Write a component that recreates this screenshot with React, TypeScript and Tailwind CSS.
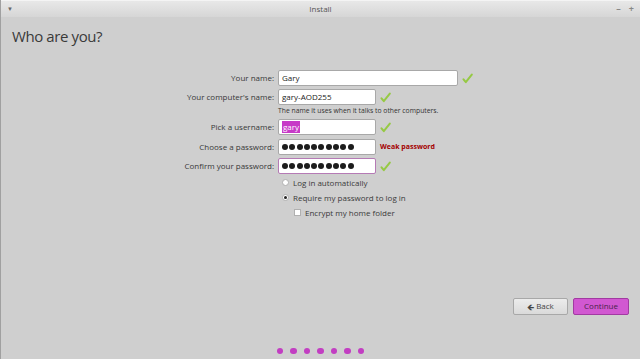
import { ReactNode } from "react";

const Check = () => (
    <svg width="11" height="11" viewBox="0 0 11 11" className="shrink-0">
        <path d="M1.5 6.3 L3.8 9.2 L9.8 1.6" fill="none" stroke="#96c944" strokeWidth="2" strokeLinecap="round" strokeLinejoin="round" />
    </svg>
)

const Dots = () => (
    <div className="flex gap-[1.3px]">
        {[0, 1, 2, 3, 4, 5, 6, 7, 8, 9].map((i) => (
            <span key={i} className="w-[6px] h-[6px] rounded-full bg-[#1c1c1c]" />
        ))}
    </div>
)

const Row = ({ label, children }: { label: string, children: ReactNode }) => (
    <div className="flex items-center h-[16px]">
        <div className="w-[277px] text-right pr-[4px] text-[8px] text-[#383838]">{label}</div>
        <div className="flex items-center gap-[4px]">{children}</div>
    </div>
)

const Field = ({ w, children, border = "border-[#a8a8a8]" }: { w: string, children: ReactNode, border?: string }) => (
    <div className={`${w} h-[16px] bg-white border ${border} rounded-[2px] flex items-center px-[3px] text-[8px] text-[#222]`}>
        {children}
    </div>
)

const App = () => {
    return (
        <div className="w-[640px] h-[359px] flex flex-col bg-[#cfcfcf] border-l border-[#a0a0a0] overflow-hidden" style={{ fontFamily: '"Open Sans", "Noto Sans", sans-serif' }}>

            <div className="h-[17px] shrink-0 grid grid-cols-3 items-center px-[6px] bg-gradient-to-b from-[#e8e8e8] to-[#d6d6d6] border-t border-[#f4f4f4]">
                <span className="text-[6px] text-[#666]">▼</span>
                <span className="text-[8px] text-[#555] text-center">Install</span>
                <div className="flex items-center justify-end gap-[8px] text-[9px] text-[#888] font-bold">
                    <span>–</span>
                    <span>+</span>
                </div>
            </div>

            <div className="pl-[11px] pt-[9px] text-[15px] leading-[20px] tracking-[-0.4px] text-[#3a3a3a]">Who are you?</div>

            <div className="flex flex-col mt-[24px]">
                <Row label="Your name:">
                    <Field w="w-[180px]">Gary</Field>
                    <Check />
                </Row>
                <div className="h-[3px]" />
                <Row label="Your computer's name:">
                    <Field w="w-[98px]">gary-AOD255</Field>
                    <Check />
                </Row>
                <div className="pl-[277px] pt-[1px] text-[6.8px] leading-[9px] text-[#333]">The name it uses when it talks to other computers.</div>
                <div className="h-[4px]" />
                <Row label="Pick a username:">
                    <Field w="w-[98px]"><span className="bg-[#c73ac7] text-white px-[1px]">gary</span></Field>
                    <Check />
                </Row>
                <div className="h-[4px]" />
                <Row label="Choose a password:">
                    <Field w="w-[98px]"><Dots /></Field>
                    <span className="text-[7px] font-bold text-[#a40000]">Weak password</span>
                </Row>
                <div className="h-[3px]" />
                <Row label="Confirm your password:">
                    <Field w="w-[98px]" border="border-[#b57ab5]"><Dots /></Field>
                    <Check />
                </Row>

                <div className="pl-[281px] mt-[1px] flex flex-col text-[8px] text-[#3a3a3a]">
                    <div className="flex items-center gap-[4px] h-[15px]">
                        <span className="w-[7px] h-[7px] rounded-full bg-white border border-[#b0b0b0]" />
                        <span>Log in automatically</span>
                    </div>
                    <div className="flex items-center gap-[4px] h-[15px]">
                        <span className="w-[7px] h-[7px] rounded-full bg-white border border-[#b0b0b0] flex items-center justify-center">
                            <span className="w-[3px] h-[3px] rounded-full bg-[#222]" />
                        </span>
                        <span>Require my password to log in</span>
                    </div>
                    <div className="flex items-center gap-[4px] h-[15px] pl-[12px]">
                        <span className="w-[7px] h-[7px] bg-white border border-[#b0b0b0]" />
                        <span>Encrypt my home folder</span>
                    </div>
                </div>
            </div>

            <div className="flex-1" />

            <div className="flex justify-end gap-[5px] pr-[11px] text-[8px]">
                <button className="w-[55px] h-[17px] flex items-center justify-center gap-[2px] rounded-[2px] border border-[#a8a8a8] bg-gradient-to-b from-[#ececec] to-[#dadada] text-[#444]">
                    <span className="text-[9px] leading-none">🡸</span>Back
                </button>
                <button className="w-[56px] h-[17px] flex items-center justify-center rounded-[2px] border border-[#a23aa2] bg-[#d158d1] text-[#4a244a]">
                    Continue
                </button>
            </div>

            <div className="h-[33px]" />

            <div className="flex justify-center gap-[7px] pb-[5px]">
                {[0, 1, 2, 3, 4, 5, 6].map((i) => (
                    <span key={i} className="w-[6.5px] h-[6.5px] rounded-full bg-[#c23ec2]" />
                ))}
            </div>
        </div>
    )
}

export default App;
